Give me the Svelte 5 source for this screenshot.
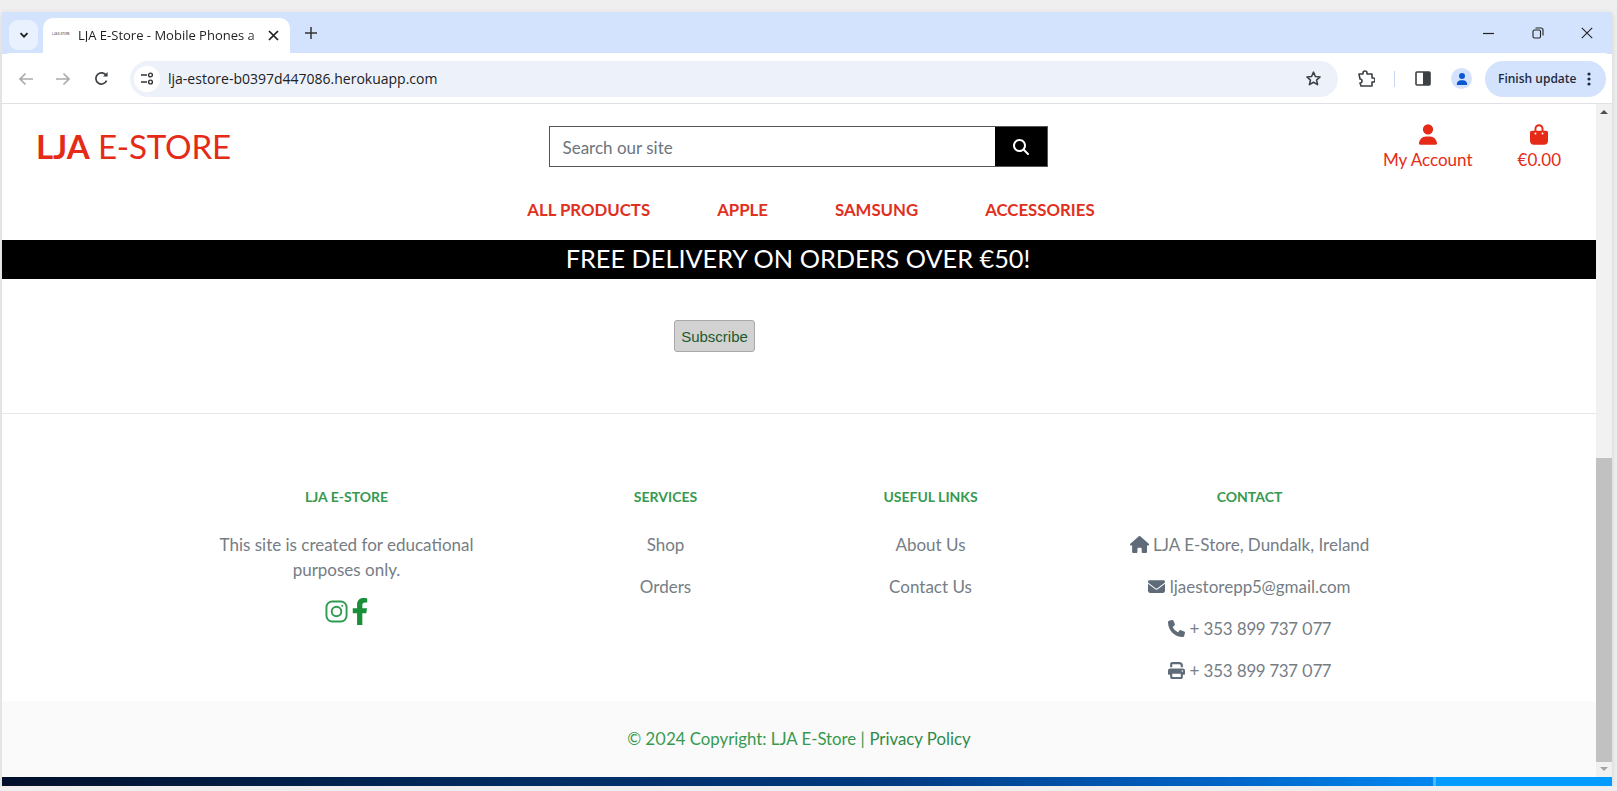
<script lang="ts">
	const navLinks = ['All Products', 'Apple', 'Samsung', 'Accessories'];
	const services = ['Shop', 'Orders'];
	const usefulLinks = ['About Us', 'Contact Us'];

	const icons = {
		house: { box: '0 0 576 512', d: 'M575.8 255.5c0 18-15 32.1-32 32.1h-32l.7 160.2c0 2.7-.2 5.4-.5 8.1V472c0 22.1-17.9 40-40 40H456c-1.1 0-2.2 0-3.3-.1c-1.4 .1-2.8 .1-4.2 .1H416 392c-22.1 0-40-17.9-40-40V448 384c0-17.7-14.3-32-32-32H256c-17.7 0-32 14.3-32 32v64 24c0 22.1-17.9 40-40 40H160 128.1c-1.5 0-3-.1-4.5-.2c-1.2 .1-2.4 .2-3.6 .2H104c-22.1 0-40-17.9-40-40V360c0-.9 0-1.9 .1-2.8V287.6H32c-18 0-32-14-32-32.1c0-9 3-17 10-24L266.4 8c7-7 15-8 22-8s15 2 21 7L564.8 231.5c8 7 12 15 11 24z' },
		envelope: { box: '0 0 512 512', d: 'M48 64C21.5 64 0 85.5 0 112c0 15.1 7.1 29.3 19.2 38.4L236.8 313.6c11.4 8.5 27 8.5 38.4 0L492.8 150.4c12.1-9.1 19.2-23.3 19.2-38.4c0-26.5-21.5-48-48-48H48zM0 176V384c0 35.3 28.7 64 64 64H448c35.3 0 64-28.7 64-64V176L294.4 339.2c-22.8 17.1-54 17.1-76.8 0L0 176z' },
		phone: { box: '0 0 512 512', d: 'M164.9 24.6c-7.7-18.6-28-28.5-47.4-23.2l-88 24C12.1 30.2 0 46 0 64C0 311.4 200.6 512 448 512c18 0 33.8-12.1 38.6-29.5l24-88c5.3-19.4-4.6-39.7-23.2-47.4l-96-40c-16.3-6.8-35.2-2.1-46.3 11.6L304.7 368C234.3 334.7 177.3 277.7 144 207.3L193.3 167c13.7-11.2 18.4-30 11.6-46.3l-40-96z' },
		print: { box: '0 0 512 512', d: 'M128 0C92.7 0 64 28.7 64 64v96h64V64H354.7L384 93.3V160h64V93.3c0-17-6.7-33.3-18.7-45.3L400 18.7C388 6.7 371.7 0 354.7 0H128zM384 352v32 64H128V384 368 352H384zm64 32h32c17.7 0 32-14.3 32-32V256c0-35.3-28.7-64-64-64H64c-35.3 0-64 28.7-64 64v96c0 17.7 14.3 32 32 32H64v64c0 35.3 28.7 64 64 64H384c35.3 0 64-28.7 64-64V384zM432 248a24 24 0 1 1 0 48 24 24 0 1 1 0-48z' }
	};

	const contact = [
		{ icon: icons.house, text: 'LJA E-Store, Dundalk, Ireland' },
		{ icon: icons.envelope, text: 'ljaestorepp5@gmail.com' },
		{ icon: icons.phone, text: '+ 353 899 737 077' },
		{ icon: icons.print, text: '+ 353 899 737 077' }
	];
</script>

<div class="window">
	<div class="tabstrip">
		<button class="tab-search" aria-label="Search tabs">
			<svg width="12" height="12" viewBox="0 0 12 12"><path d="M2.5 4.2 6 7.7l3.5-3.5" fill="none" stroke="#1f1f1f" stroke-width="1.8" /></svg>
		</button>
		<div class="tab">
			<span class="favicon">LJA E-STORE</span>
			<span class="tab-title">LJA E-Store - Mobile Phones a</span>
			<svg class="tab-close" width="11" height="11" viewBox="0 0 11 11"><path d="M1 1l9 9M10 1l-9 9" stroke="#1f1f1f" stroke-width="1.7" /></svg>
		</div>
		<svg class="new-tab" width="12" height="12" viewBox="0 0 12 12"><path d="M6 0v12M0 6h12" stroke="#333" stroke-width="1.5" /></svg>
		<div class="win-controls">
			<svg width="11" height="11" viewBox="0 0 11 11"><path d="M0 5.5h11" stroke="#222" stroke-width="1.2" /></svg>
			<svg width="12" height="12" viewBox="0 0 12 12"><rect x="1" y="3" width="7.5" height="8" rx="1.5" fill="none" stroke="#222" stroke-width="1.1" /><path d="M3.5 1h5.5a2 2 0 0 1 2 2v5.5" fill="none" stroke="#222" stroke-width="1.1" /></svg>
			<svg width="12" height="12" viewBox="0 0 12 12"><path d="M.8.8l10.4 10.4M11.2.8.8 11.2" stroke="#222" stroke-width="1.1" /></svg>
		</div>
	</div>

	<div class="toolbar">
		<svg class="nav-icon" width="16" height="14" viewBox="0 0 16 14"><path d="M15 7H2M7.5 1.5 2 7l5.5 5.5" fill="none" stroke="#a9abae" stroke-width="1.7" /></svg>
		<svg class="nav-icon" width="16" height="14" viewBox="0 0 16 14"><path d="M1 7h13M8.5 1.5 14 7l-5.5 5.5" fill="none" stroke="#a9abae" stroke-width="1.7" /></svg>
		<svg class="nav-icon reload" width="15" height="15" viewBox="0 0 15 15"><path d="M12.6 9.6a5.6 5.6 0 1 1-.3-5" fill="none" stroke="#3c4043" stroke-width="1.7" /><path d="M13.6 1v4.6H9z" fill="#3c4043" /></svg>
		<div class="omnibox">
			<span class="site-info">
				<svg width="14" height="13" viewBox="0 0 14 13"><path d="M1 3h6M1 10h6" stroke="#333" stroke-width="1.5" /><circle cx="10.5" cy="3" r="1.9" fill="none" stroke="#333" stroke-width="1.4" /><circle cx="10.5" cy="10" r="1.9" fill="none" stroke="#333" stroke-width="1.4" /></svg>
			</span>
			<span class="url">lja-estore-b0397d447086.herokuapp.com</span>
			<svg class="star" width="17" height="17" viewBox="0 0 24 24"><path d="M12 3l2.7 6.1 6.6.7-5 4.4 1.5 6.5L12 17.3l-5.8 3.4 1.5-6.5-5-4.4 6.6-.7z" fill="none" stroke="#3c4043" stroke-width="2.2" stroke-linejoin="round" /></svg>
		</div>
		<svg class="puzzle" width="18" height="18" viewBox="0 0 18 18"><path d="M2 4h4V3a2 2 0 0 1 4 0v1h5v4h1a2 2 0 0 1 0 4h-1v4H4l-1-3a2 2 0 0 0 0-4L2 4z" fill="none" stroke="#3c4043" stroke-width="1.6" stroke-linejoin="round" /></svg>
		<span class="sep"></span>
		<svg class="panel" width="16" height="15" viewBox="0 0 16 15"><rect x="1" y="1" width="14" height="13" rx="1" fill="#fff" stroke="#3c4043" stroke-width="1.6" /><rect x="8" y="1" width="7" height="13" fill="#3c4043" /></svg>
		<span class="avatar">
			<svg width="12" height="12" viewBox="0 0 448 512"><path fill="#0b57d0" d="M224 256A128 128 0 1 0 224 0a128 128 0 1 0 0 256zm-45.7 48C79.8 304 0 383.8 0 482.3C0 498.7 13.3 512 29.7 512H418.3c16.4 0 29.7-13.3 29.7-29.7C448 383.8 368.2 304 269.7 304H178.3z" /></svg>
		</span>
		<div class="update">
			<span>Finish update</span>
			<svg width="4" height="14" viewBox="0 0 4 14"><circle cx="2" cy="2" r="1.6" fill="#1f2b3d" /><circle cx="2" cy="7" r="1.6" fill="#1f2b3d" /><circle cx="2" cy="12" r="1.6" fill="#1f2b3d" /></svg>
		</div>
	</div>

	<div class="viewport">
		<main class="page">
			<header class="masthead">
				<div class="logo"><strong>LJA</strong> E-STORE</div>
				<form class="search">
					<span class="search-field">Search our site</span>
					<span class="search-btn">
						<svg width="16" height="16" viewBox="0 0 512 512"><path fill="#fff" d="M416 208c0 45.9-14.9 88.3-40 122.7L502.6 457.4c12.5 12.5 12.5 32.8 0 45.3s-32.8 12.5-45.3 0L330.7 376c-34.4 25.2-76.8 40-122.7 40C93.1 416 0 322.9 0 208S93.1 0 208 0S416 93.1 416 208zM208 352a144 144 0 1 0 0-288 144 144 0 1 0 0 288z" /></svg>
					</span>
				</form>
				<div class="account-links">
					<a class="account-link" href="#account">
						<svg width="18" height="21" viewBox="0 0 448 512"><path fill="currentColor" d="M224 256A128 128 0 1 0 224 0a128 128 0 1 0 0 256zm-45.7 48C79.8 304 0 383.8 0 482.3C0 498.7 13.3 512 29.7 512H418.3c16.4 0 29.7-13.3 29.7-29.7C448 383.8 368.2 304 269.7 304H178.3z" /></svg>
						<span>My Account</span>
					</a>
					<a class="account-link" href="#bag">
						<svg width="18" height="21" viewBox="0 0 448 512"><path fill="currentColor" d="M160 112c0-35.3 28.7-64 64-64s64 28.7 64 64v48H160V112zm-48 48H48c-26.5 0-48 21.5-48 48V416c0 53 43 96 96 96H352c53 0 96-43 96-96V208c0-26.5-21.5-48-48-48H336V112C336 50.1 285.9 0 224 0S112 50.1 112 112v48zm24 48a24 24 0 1 1 0 48 24 24 0 1 1 0-48zm152 24a24 24 0 1 1 48 0 24 24 0 1 1 -48 0z" /></svg>
						<span>€0.00</span>
					</a>
				</div>
			</header>

			<nav class="main-nav">
				{#each navLinks as link (link)}
					<a href="#{link}">{link}</a>
				{/each}
			</nav>

			<div class="banner">FREE DELIVERY ON ORDERS OVER €50!</div>

			<section class="subscribe">
				<button type="button">Subscribe</button>
			</section>

			<footer class="site-footer">
				<div class="columns">
					<div class="col">
						<h6>LJA E-STORE</h6>
						<p class="about">This site is created for educational purposes only.</p>
						<div class="social">
							<svg width="23" height="23" viewBox="0 0 24 24" fill="none" stroke="#2f9a52" stroke-width="2"><rect x="1.5" y="1.5" width="21" height="21" rx="6" /><circle cx="12" cy="12" r="5" /><circle cx="18" cy="6" r="1" fill="#2f9a52" stroke="none" /></svg>
							<svg width="18" height="27" viewBox="0 0 320 512"><path fill="#1a8f3a" d="M279.14 288l14.22-92.66h-88.91v-60.13c0-25.35 12.42-50.06 52.24-50.06h40.42V6.26S260.43 0 225.36 0c-73.22 0-121.08 44.38-121.08 124.72v70.62H22.89V288h81.39v224h100.17V288z" /></svg>
						</div>
					</div>
					<div class="col">
						<h6>SERVICES</h6>
						{#each services as item (item)}
							<p>{item}</p>
						{/each}
					</div>
					<div class="col">
						<h6>USEFUL LINKS</h6>
						{#each usefulLinks as item (item)}
							<p>{item}</p>
						{/each}
					</div>
					<div class="col">
						<h6>CONTACT</h6>
						{#each contact as row, i (i)}
							<p>
								<svg class="contact-icon" height="17" viewBox={row.icon.box}><path fill="#5f6b78" d={row.icon.d} /></svg>
								{row.text}
							</p>
						{/each}
					</div>
				</div>
				<div class="copyright">© 2024 Copyright: LJA E-Store | <a href="#privacy">Privacy Policy</a></div>
			</footer>
		</main>

		<div class="scrollbar">
			<span class="arrow up"></span>
			<div class="track"><div class="thumb"></div></div>
			<span class="arrow down"></span>
		</div>
	</div>

	<div class="taskbar"><span class="taskbar-end"></span></div>
</div>

<style>
	:global(body) {
		background: #efefef;
		overflow: hidden;
	}

	.window {
		box-sizing: border-box;
		width: 1610px;
		height: 774px;
		margin: 12px 0 0 2px;
		display: flex;
		flex-direction: column;
		background: #fff;
		font-family: "Lato", sans-serif;
		box-shadow: 0 2px 6px rgba(0, 0, 0, 0.12);
	}

	/* browser chrome */
	.tabstrip {
		flex: 0 0 42px;
		display: flex;
		align-items: flex-end;
		background: #d3e3fd;
	}

	.tab-search {
		width: 29px;
		height: 30px;
		margin: 0 5px 4px 7px;
		padding: 0;
		display: flex;
		align-items: center;
		justify-content: center;
		border: 0;
		border-radius: 9px;
		background: #e9f1fe;
	}

	.tab {
		box-sizing: border-box;
		width: 247px;
		height: 36px;
		display: flex;
		align-items: center;
		padding: 0 11px 2px 9px;
		background: #fff;
		border-radius: 10px 10px 0 0;
		font: 13px/1 "Open Sans", sans-serif;
		color: #1f1f1f;
	}

	.favicon {
		width: 16px;
		margin-right: 10px;
		font: 700 2.7px/1 "Liberation Sans", sans-serif;
		color: #777;
		white-space: nowrap;
	}

	.tab-title {
		flex: 1;
		white-space: nowrap;
		mask-image: linear-gradient(to right, #000 90%, rgba(0, 0, 0, 0.15));
	}

	.new-tab {
		margin: 0 0 15px 15px;
	}

	.win-controls {
		margin: 0 19px 15px auto;
		display: flex;
		align-items: center;
		gap: 37.5px;
	}

	.toolbar {
		flex: 0 0 51px;
		box-sizing: border-box;
		display: flex;
		align-items: center;
		padding: 1px 6px 0 16px;
		border-bottom: 1px solid #dfe1e5;
		border-radius: 8px 8px 0 0;
		margin-top: -1px;
		background: #fff;
	}

	.nav-icon {
		margin-right: 21px;
	}

	.nav-icon.reload {
		margin: 0 21px 0 2px;
	}

	.omnibox {
		flex: 0 0 1208px;
		height: 36px;
		display: flex;
		align-items: center;
		padding: 0 16px 0 4px;
		box-sizing: border-box;
		border-radius: 18px;
		background: #edf2fa;
	}

	.site-info {
		width: 26px;
		height: 26px;
		display: flex;
		align-items: center;
		justify-content: center;
		border-radius: 50%;
		background: #fff;
	}

	.url {
		margin-left: 8px;
		font: 14px/1 "Open Sans", sans-serif;
		color: #202124;
	}

	.star {
		margin-left: auto;
	}

	.puzzle {
		margin-left: 19px;
	}

	.sep {
		width: 1px;
		height: 16px;
		margin: 0 20px 0 19px;
		background: #c5d7f2;
	}

	.avatar {
		width: 21px;
		height: 21px;
		margin-left: 20px;
		display: flex;
		align-items: center;
		justify-content: center;
		border-radius: 50%;
		background: #d3e3fd;
	}

	.update {
		box-sizing: border-box;
		width: 121px;
		height: 36px;
		margin-left: 13px;
		display: flex;
		align-items: center;
		justify-content: space-between;
		padding: 0 15px 0 13px;
		border-radius: 18px;
		background: #d3e3fd;
		font: 600 12px/1 "Open Sans", sans-serif;
		color: #1f2b3d;
	}

	/* page */
	.viewport {
		flex: 1;
		min-height: 0;
		display: flex;
	}

	.page {
		flex: 1;
		min-width: 0;
		display: flex;
		flex-direction: column;
	}

	.masthead {
		display: grid;
		grid-template-columns: 1fr 499px 1fr;
		align-items: flex-start;
		height: 94px;
		box-sizing: border-box;
		padding-top: 22px;
	}

	.logo {
		padding: 0 0 0 34px;
		font-size: 33.2px;
		line-height: 41px;
		font-weight: 400;
		color: #e52b17;
		letter-spacing: -0.2px;
		white-space: nowrap;
	}

	.logo strong {
		font-weight: 700;
	}

	.search {
		display: flex;
		height: 41px;
		margin: 0 1px 0 -1px;
		box-sizing: border-box;
		border: 1px solid #555;
	}

	.search-field {
		flex: 1;
		padding-left: 13px;
		font-size: 17px;
		line-height: 41px;
		color: #6c757d;
	}

	.search-btn {
		width: 52px;
		display: flex;
		align-items: center;
		justify-content: center;
		background: #000;
	}

	.account-links {
		display: flex;
		justify-content: flex-end;
		gap: 45px;
		padding-right: 35px;
		margin-top: -2px;
	}

	.account-link {
		display: flex;
		flex-direction: column;
		align-items: center;
		gap: 5px;
		color: #e52b17;
		font-size: 17px;
		line-height: 20px;
		text-decoration: none;
	}

	.main-nav {
		height: 42px;
		display: flex;
		justify-content: center;
		gap: 67px;
		padding-left: 24px;
	}

	.main-nav a {
		font-size: 16.8px;
		line-height: 24px;
		font-weight: 700;
		color: #e0301e;
		text-transform: uppercase;
		text-decoration: none;
	}

	.banner {
		height: 39px;
		box-sizing: border-box;
		padding-right: 2px;
		background: #000;
		color: #fff;
		text-align: center;
		font-size: 25.3px;
		line-height: 37px;
	}

	.subscribe {
		height: 135px;
		box-sizing: border-box;
		padding: 41px 0 0 672px;
		border-bottom: 1px solid #e7e7e7;
	}

	.subscribe button {
		width: 81px;
		height: 32px;
		padding: 0;
		background: #d2d2d2;
		border: 1px solid #a8a8a8;
		border-radius: 3px;
		font: 15px "Liberation Sans", sans-serif;
		color: #1c5a2c;
	}

	.site-footer {
		flex: 1;
		display: flex;
		flex-direction: column;
		font-variant-numeric: proportional-nums;
	}

	.columns {
		flex: 1;
		display: grid;
		grid-template-columns: 373px 265px 265px 373px;
		justify-content: center;
		padding: 74px 2px 0 0;
		text-align: center;
	}

	.col h6 {
		margin: 0 0 26px;
		font-size: 14px;
		line-height: 18px;
		font-weight: 700;
		color: #37994f;
	}

	.col p {
		margin: 0 0 17px;
		font-size: 17px;
		line-height: 25px;
		color: #757d85;
	}

	.col .about {
		margin: 0 50px 16px;
	}

	.contact-icon {
		vertical-align: -2px;
	}

	.social {
		display: flex;
		justify-content: center;
		align-items: center;
		gap: 3px;
	}

	.copyright {
		height: 76px;
		box-sizing: border-box;
		padding-bottom: 2px;
		display: flex;
		align-items: center;
		justify-content: center;
		gap: 0.28em;
		background: #fafafa;
		font-size: 16.8px;
		color: #37994f;
	}

	.copyright a {
		color: #2f8a48;
		text-decoration: none;
	}

	/* page scrollbar */
	.scrollbar {
		flex: 0 0 16px;
		display: flex;
		flex-direction: column;
		align-items: center;
		background: #f1f1f1;
	}

	.arrow {
		width: 0;
		height: 0;
		border-left: 4px solid transparent;
		border-right: 4px solid transparent;
	}

	.arrow.up {
		margin: 6px 0 5px;
		border-bottom: 4px solid #505050;
	}

	.arrow.down {
		margin: 5px 0 6px;
		border-top: 4px solid #a3a3a3;
	}

	.track {
		flex: 1;
		width: 100%;
		display: flex;
		flex-direction: column;
		justify-content: flex-end;
	}

	.thumb {
		height: 304px;
		background: #c1c1c1;
	}

	.taskbar {
		flex: 0 0 9px;
		display: flex;
		justify-content: flex-end;
		background: linear-gradient(to right, #000f2a 0%, #002a5e 30%, #003a80 55%, #0062c4 75%, #0086ee 88%, #0090f8 100%);
	}

	.taskbar-end {
		width: 176px;
		background: #009cff;
		border-left: 3px solid #4db8f5;
	}
</style>
